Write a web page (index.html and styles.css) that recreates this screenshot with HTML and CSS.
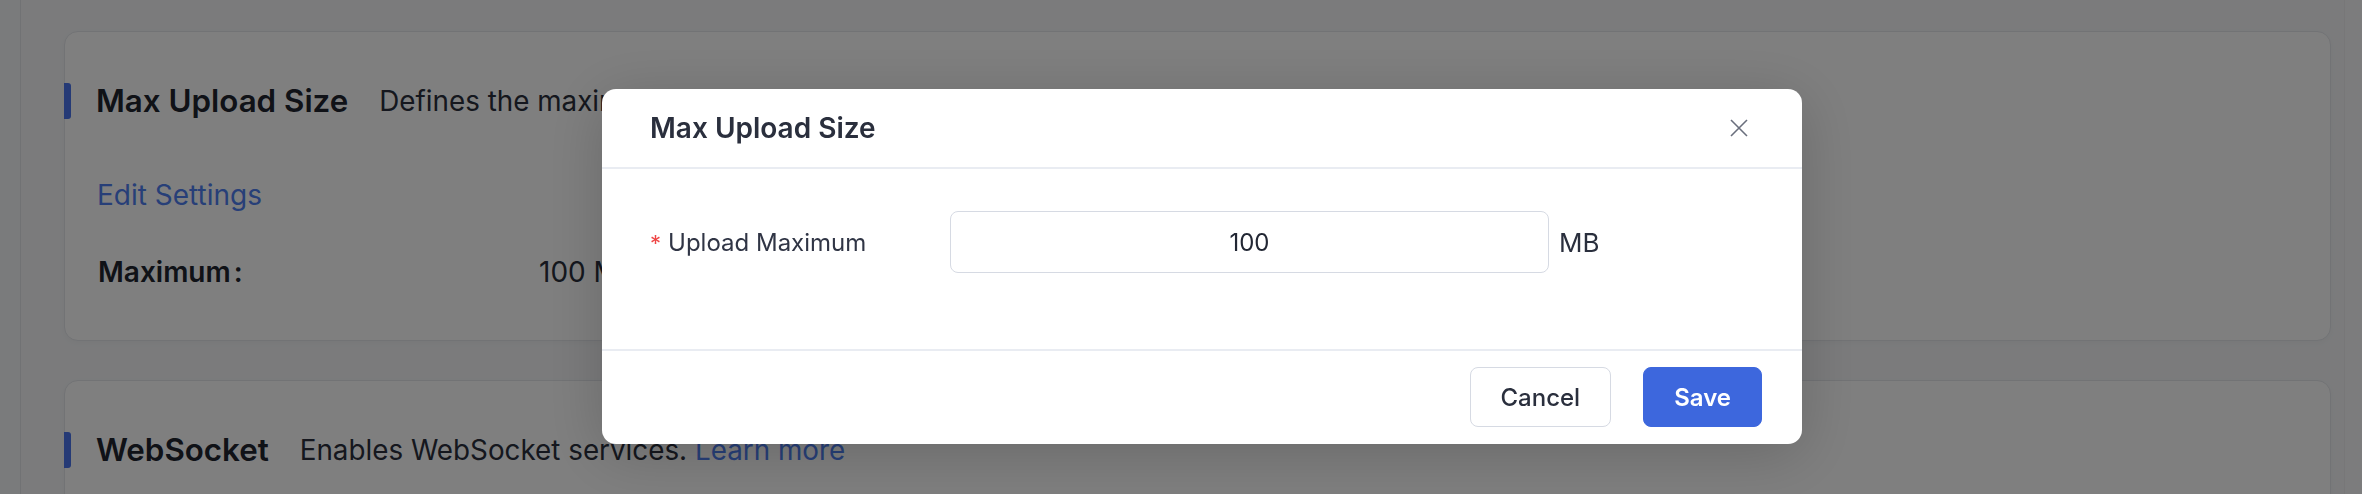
FILE: index.html
```html
<!DOCTYPE html>
<html lang="en">
<head>
<meta charset="utf-8">
<title>Settings</title>
<link rel="stylesheet" href="styles.css">
</head>
<body>
<div class="app">
  <aside class="sidebar"></aside>
  <main class="content">
    <section class="card">
      <header class="card-head">
        <h2 class="card-title">Max Upload Size</h2>
        <p class="card-desc">Defines the maximum size of a single file that can be uploaded.</p>
      </header>
      <a class="link edit-link" href="#">Edit Settings</a>
      <dl class="props">
        <dt>Maximum<span class="colon">:</span></dt>
        <dd>100 MB</dd>
      </dl>
    </section>
    <section class="card card-open">
      <header class="card-head">
        <h2 class="card-title">WebSocket</h2>
        <p class="card-desc">Enables WebSocket services. <a class="link" href="#">Learn more</a></p>
      </header>
    </section>
  </main>
  <div class="scroll-track"></div>
</div>

<div class="mask">
  <div class="dialog" role="dialog" aria-labelledby="dlg-title">
    <div class="dialog-head">
      <h3 id="dlg-title" class="dialog-title">Max Upload Size</h3>
      <button class="dialog-close" aria-label="Close">
        <svg viewBox="0 0 20 20" width="20" height="20"><path d="M2 2 L18 18 M18 2 L2 18" /></svg>
      </button>
    </div>
    <div class="dialog-body">
      <div class="form-row">
        <label class="form-label" for="upload-max"><span class="req">*</span>Upload Maximum</label>
        <div class="form-control">
          <input id="upload-max" class="num-input" type="text" value="100">
          <span class="unit">MB</span>
        </div>
      </div>
    </div>
    <div class="dialog-foot">
      <button class="btn btn-default">Cancel</button>
      <button class="btn btn-primary">Save</button>
    </div>
  </div>
</div>
</body>
</html>
```

FILE: styles.css
```css
* { box-sizing: border-box; }

html, body {
  margin: 0;
  height: 100%;
  overflow: hidden;
}

body {
  font-family: Inter, "Noto Sans", "Liberation Sans", sans-serif;
  background: #f6f7f9;
  color: #2a2f3d;
}

.app {
  display: flex;
  height: 100vh;
}

.sidebar {
  width: 21px;
  flex: none;
  background: #f5f6f8;
  border-right: 1px solid #e2e4e9;
}

.content {
  flex: 1;
  padding: 31px 13px 0 43px;
  display: flex;
  flex-direction: column;
  gap: 39px;
}

.scroll-track {
  width: 18px;
  flex: none;
  background: #f9f9fa;
  border-left: 1px solid #eeeff1;
}

/* setting card */
.card {
  background: #fff;
  border: 1px solid #e4e6eb;
  border-radius: 14px;
  padding: 51px 32px 50px 32px;
  box-shadow: 0 2px 6px rgba(0, 0, 0, 0.03);
  flex: none;
}

.card-open {
  padding-bottom: 120px;
}

.card-head {
  display: flex;
  align-items: center;
  height: 36px;
  margin-left: -33px;
}

.card-head::before {
  content: "";
  width: 7px;
  height: 36px;
  background: #4b74ec;
  border-radius: 0 3px 3px 0;
  margin-right: 25px;
  flex: none;
}

.card-title {
  margin: 0;
  font-size: 31.3px;
  font-weight: 600;
  color: #20242f;
  line-height: 36px;
  white-space: nowrap;
}

.card-desc {
  margin: 0 0 0 31px;
  font-size: 27.8px;
  color: #2a2f3c;
  line-height: 36px;
  white-space: nowrap;
}

.link {
  color: #4f7ff0;
  text-decoration: none;
}

.edit-link {
  display: block;
  margin-top: 58px;
  font-size: 28px;
  line-height: 36px;
  width: max-content;
}

.props {
  display: grid;
  grid-template-columns: 442px 1fr;
  margin: 41px 0 0;
  font-size: 28px;
  line-height: 36px;
}

.props dt {
  font-weight: 600;
  color: #20242f;
  padding-left: 1px;
}

.colon {
  margin-left: 3px;
}

.props dd {
  margin: 0;
  color: #2a2f3c;
}

/* modal */
.mask {
  position: fixed;
  inset: 0;
  background: rgba(0, 0, 0, 0.5);
  display: flex;
  align-items: flex-start;
  padding: 89px 0 0 602px;
}

.dialog {
  width: 1200px;
  background: #fff;
  border-radius: 14px;
  box-shadow: 0 10px 60px rgba(0, 0, 0, 0.18);
  overflow: hidden;
}

.dialog-head {
  height: 80px;
  padding: 0 48px 0 48px;
  display: flex;
  align-items: center;
  justify-content: space-between;
  border-bottom: 2px solid #e9ecf2;
}

.dialog-title {
  margin: 0;
  font-size: 28px;
  font-weight: 600;
  color: #2a2f3d;
}

.dialog-close {
  border: 0;
  background: none;
  padding: 0;
  margin-right: 5px;
  width: 20px;
  height: 20px;
  display: flex;
}

.dialog-close svg path {
  stroke: #6a6f7d;
  stroke-width: 1.6;
  fill: none;
}

.dialog-body {
  padding: 42px 48px 76px 48px;
}

.form-row {
  display: flex;
  align-items: center;
}

.form-label {
  width: 300px;
  flex: none;
  font-size: 24px;
  color: #303545;
}

.req {
  color: #ef4444;
  margin-right: 7px;
  font-size: 22px;
}

.form-control {
  display: flex;
  align-items: center;
}

.num-input {
  width: 599px;
  height: 62px;
  border: 1.5px solid #d6dae3;
  border-radius: 8px;
  text-align: center;
  font-family: inherit;
  font-size: 24px;
  color: #222734;
  outline: none;
}

.unit {
  margin-left: 10px;
  font-size: 26px;
  color: #2a2f3d;
}

.dialog-foot {
  border-top: 2px solid #e9ecf2;
  padding: 16px 40px 17px 0;
  display: flex;
  justify-content: flex-end;
  gap: 32px;
}

.btn {
  height: 60px;
  padding: 0 30px;
  border-radius: 8px;
  font-family: inherit;
  font-size: 24px;
}

.btn-default {
  background: #fff;
  border: 1.5px solid #d6dae3;
  color: #2a2f3d;
  font-weight: 500;
}

.btn-primary {
  background: #3d67dd;
  border: 1.5px solid #3d67dd;
  color: #fff;
  font-weight: 600;
}
```
